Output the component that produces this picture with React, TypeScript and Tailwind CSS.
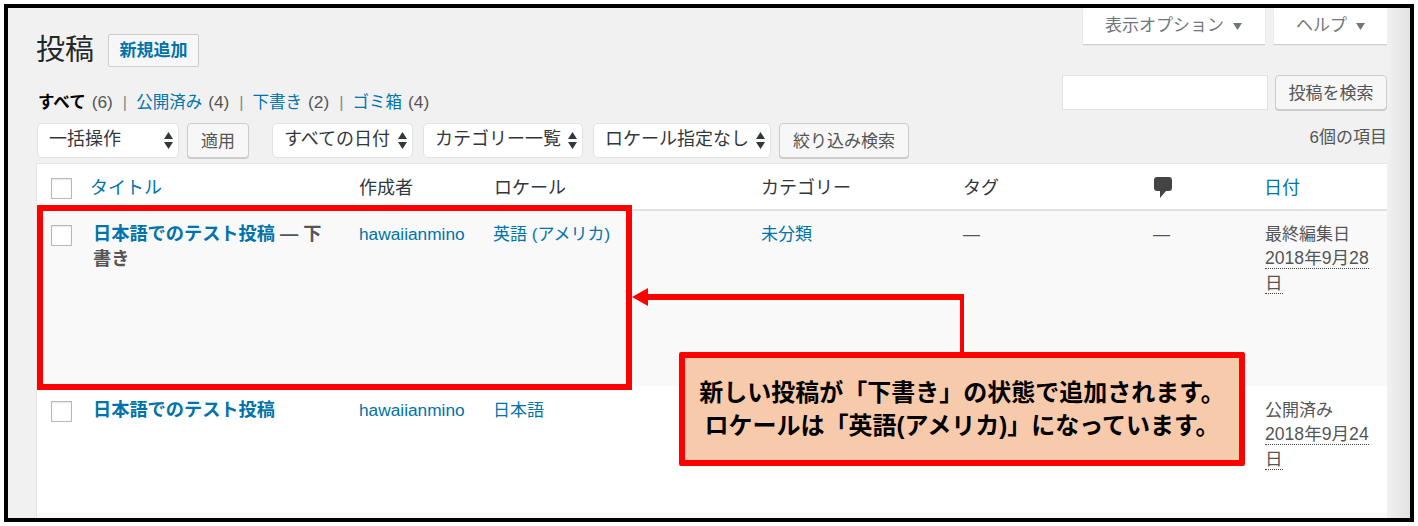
const link = 'text-[#0073aa]';

function Caret() {
  return (
    <svg width="9" height="17" viewBox="0 0 9 17" className="shrink-0" fill="#32373c">
      <path d="M4.5 0 L9 7 H0 Z" />
      <path d="M4.5 17 L0 10 H9 Z" />
    </svg>
  );
}

function TabArrow() {
  return (
    <svg width="9" height="7" viewBox="0 0 9 7" fill="#72777c" className="shrink-0">
      <path d="M0 0 H9 L4.5 7 Z" />
    </svg>
  );
}

function SelectBox({ label, width }: { label: string; width: string }) {
  return (
    <div className={`${width} h-[35px] bg-white border border-[#e2e2e2] rounded-[5px] flex items-center justify-between pl-[11px] pr-[5px] text-[18px] text-[#32373c] shrink-0`}>
      <span className="whitespace-nowrap -mt-[2px]">{label}</span>
      <Caret />
    </div>
  );
}

function Btn({ label, width }: { label: string; width: string }) {
  return (
    <div className={`${width} h-[35px] pt-[2px] bg-[#f7f7f7] border border-[#cccccc] rounded-[4px] shadow-[0_1px_0_#cccccc] flex items-center justify-center text-[17px] text-[#555555] shrink-0 whitespace-nowrap`}>
      {label}
    </div>
  );
}

function Check() {
  return <div className="w-[21px] h-[21px] bg-white border border-[#b4b9be] shadow-[inset_0_1px_2px_rgba(0,0,0,0.1)] shrink-0" />;
}

function Sep() {
  return <span className="ml-[10px] mr-[9px] text-[#888888]">|</span>;
}

function Count({ n }: { n: number }) {
  return <span className="ml-[6px] text-[17.3px]">({n})</span>;
}

type RowProps = {
  bg: string;
  height: string;
  checkPad: string;
  textPad: string;
  title: string;
  draft?: boolean;
  locale: string;
  category?: string;
  status: string;
  date: string;
};

function Row({ bg, height, checkPad, textPad, title, draft, locale, category, status, date }: RowProps) {
  return (
    <div className={`grid grid-cols-[322px_135px_267px_202px_190px_112px_122px] ${bg} ${height} text-[17px] leading-[25px] text-[#555555]`}>
      <div className={`flex pl-[14px] pr-[24px] ${checkPad}`}>
        <Check />
        <div className="ml-[21px] -mt-[3px] text-[18.2px] font-bold text-[#555555]">
          <span className={link}>{title}</span>
          {draft && (
            <>
              <span> — 下</span>
              <br />
              <span>書き</span>
            </>
          )}
        </div>
      </div>
      <div className={`${textPad} text-[17.3px] ${link}`}>hawaiianmino</div>
      <div className={`${textPad} -ml-px ${link}`}>{locale}</div>
      <div className={`${textPad} ${link}`}>{category}</div>
      <div className={textPad}>{category ? '—' : ''}</div>
      <div className={textPad}>{category ? '—' : ''}</div>
      <div className={`${textPad} pr-[14px]`}>
        <div>{status}</div>
        <div className="-mt-px text-[17.6px]">
          <span className="border-b border-dotted border-[#444444]">{date}</span>
        </div>
      </div>
    </div>
  );
}

export default function App() {
  return (
    <div className="w-[1418px] h-[526px] bg-white pt-[4px] pl-[4px] overflow-hidden font-['Liberation_Sans','Noto_Sans_CJK_JP',sans-serif]">
      <div className="relative w-[1410px] h-[518px] border-4 border-black bg-[#f1f1f1] flex overflow-hidden">
        <div className="w-[1379px] pl-[29px] shrink-0">
          {/* title + search */}
          <div className="h-[115px] flex justify-between">
            <div className="pt-[26px]">
              <div className="flex items-center h-[33px]">
                <span className="-ml-px text-[29px] leading-[33px] text-[#23282d]">投稿</span>
                <div className={`ml-[14px] w-[91px] h-[33px] bg-[#f7f7f7] border border-[#cccccc] rounded-[2px] flex items-center justify-center text-[17px] font-bold ${link}`}>新規追加</div>
              </div>
              <div className="mt-[23px] pl-[1px] flex text-[16.5px] leading-[25px] text-[#555555] whitespace-nowrap">
                <span className="font-bold text-black">すべて</span>
                <Count n={6} />
                <Sep />
                <span className={link}>公開済み</span>
                <Count n={4} />
                <Sep />
                <span className={link}>下書き</span>
                <Count n={2} />
                <Sep />
                <span className={link}>ゴミ箱</span>
                <Count n={4} />
              </div>
            </div>
            <div className="flex flex-col items-end">
              <div className="flex gap-[9px] text-[17px] text-[#72777c]">
                <div className="w-[182px] h-[36px] pl-[22px] bg-white shadow-[0_1px_1px_rgba(0,0,0,0.15)] flex items-center gap-[9px]">
                  <span>表示オプション</span>
                  <TabArrow />
                </div>
                <div className="w-[113px] h-[36px] pl-[22px] bg-white shadow-[0_1px_1px_rgba(0,0,0,0.15)] flex items-center gap-[9px]">
                  <span>ヘルプ</span>
                  <TabArrow />
                </div>
              </div>
              <div className="flex gap-[7px] mt-[31px]">
                <div className="w-[206px] h-[35px] bg-white border border-[#e2e2e2]" />
                <Btn label="投稿を検索" width="w-[112px]" />
              </div>
            </div>
          </div>

          {/* filters */}
          <div className="h-[41px] flex items-start">
            <SelectBox label="一括操作" width="w-[142px]" />
            <div className="ml-[8px]"><Btn label="適用" width="w-[62px]" /></div>
            <div className="ml-[23px]"><SelectBox label="すべての日付" width="w-[141px]" /></div>
            <div className="ml-[10px]"><SelectBox label="カテゴリー一覧" width="w-[160px]" /></div>
            <div className="ml-[10px]"><SelectBox label="ロケール指定なし" width="w-[178px]" /></div>
            <div className="ml-[8px]"><Btn label="絞り込み検索" width="w-[130px]" /></div>
            <div className="ml-auto pt-[2px] text-[17px] leading-[25px] text-[#555555]">6個の項目</div>
          </div>

          {/* table */}
          <div className="w-[1350px] bg-white shadow-[0_0_0_1px_#e5e5e5]">
            <div className="grid grid-cols-[322px_135px_267px_202px_190px_112px_122px] h-[47px] border-b-2 border-[#e1e1e1] text-[18px] leading-[25px] text-[#32373c]">
              <div className="flex items-start pl-[14px] pt-[14px]">
                <Check />
                <span className={`ml-[18px] -mt-[2px] ${link}`}>タイトル</span>
              </div>
              <div className="pt-[12px]">作成者</div>
              <div className="pt-[12px]">ロケール</div>
              <div className="pt-[12px]">カテゴリー</div>
              <div className="pt-[12px]">タグ</div>
              <div className="pt-[13px] pl-px">
                <svg width="18" height="21" viewBox="0 0 18 21" fill="#444444">
                  <path d="M3 0 H15 C16.7 0 18 1.3 18 3 V11 C18 12.7 16.7 14 15 14 H12 L6 21 V14 H3 C1.3 14 0 12.7 0 11 V3 C0 1.3 1.3 0 3 0 Z" />
                </svg>
              </div>
              <div className={`pt-[12px] -ml-px ${link}`}>日付</div>
            </div>
            <Row bg="bg-[#f9f9f9]" height="h-[175px]" checkPad="pt-[14px]" textPad="pt-[11px]" title="日本語でのテスト投稿" draft locale="英語 (アメリカ)" category="未分類" status="最終編集日" date="2018年9月28日" />
            <Row bg="bg-white" height="h-[127px]" checkPad="pt-[15px]" textPad="pt-[12px]" title="日本語でのテスト投稿" locale="日本語" status="公開済み" date="2018年9月24日" />
            <div className="h-[5px] bg-[#f9f9f9]" />
          </div>
        </div>
        <div className="flex-1 bg-gradient-to-r from-[#f1f1f1] to-[#e2e2e2]" />

        {/* annotation overlay, offsets relative to the black frame's padding box */}
        <div className="absolute left-[29px] top-[197px] w-[595px] h-[185px] border-[6px] border-[#ff0000]" />
        <svg className="absolute left-[616px] top-[273px]" width="340" height="80" viewBox="0 0 340 80">
          <path d="M339 80 V16 H20" fill="none" stroke="#ff0000" strokeWidth="6" />
          <path d="M8 16 L24 7 V25 Z" fill="#ff0000" />
        </svg>
        <div className="absolute left-[671px] top-[344px] w-[566px] h-[114px] border-[6px] border-[#ff0000] rounded-[2px] bg-[#f7caac] flex flex-col items-center justify-center text-[24px] leading-[33px] font-bold text-black whitespace-nowrap">
          <div>新しい投稿が「下書き」の状態で追加されます。</div>
          <div>ロケールは「英語(アメリカ)」になっています。</div>
        </div>
      </div>
    </div>
  );
}
